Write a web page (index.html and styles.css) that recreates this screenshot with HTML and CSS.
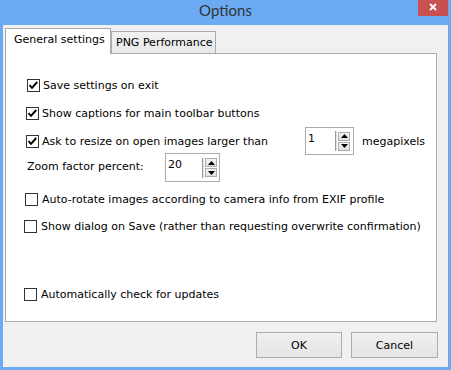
FILE: index.html
```html
<!DOCTYPE html>
<html>
<head>
<meta charset="utf-8">
<link rel="stylesheet" href="styles.css">
</head>
<body>
<div class="window">
  <div class="titlebar">
    <div class="title">Options</div>
    <div class="close"><svg width="8" height="8" viewBox="0 0 8 8"><path d="M1 1 L7 7 M7 1 L1 7" stroke="#fff" stroke-width="1.8" fill="none"/></svg></div>
  </div>
  <div class="client">
    <div class="tabs">
      <div class="tab active">General settings</div>
      <div class="tab">PNG Performance</div>
    </div>
    <div class="panel">
      <div class="row r1"><span class="box"><svg width="11" height="11" viewBox="0 0 11 11"><path d="M1.5 5.2 L4 7.8 L9.2 2" stroke="#000" stroke-width="1.9" fill="none"/></svg></span><span class="lbl">Save settings on exit</span></div>
      <div class="row r2"><span class="box"><svg width="11" height="11" viewBox="0 0 11 11"><path d="M1.5 5.2 L4 7.8 L9.2 2" stroke="#000" stroke-width="1.9" fill="none"/></svg></span><span class="lbl">Show captions for main toolbar buttons</span></div>
      <div class="row r3">
        <div class="cell w3"><span class="box"><svg width="11" height="11" viewBox="0 0 11 11"><path d="M1.5 5.2 L4 7.8 L9.2 2" stroke="#000" stroke-width="1.9" fill="none"/></svg></span><span class="lbl">Ask to resize on open images larger than</span></div>
        <div class="spin s1">
          <span class="val">1</span>
          <span class="sep"></span>
          <span class="arrows">
            <span class="arr"><svg width="7" height="4" viewBox="0 0 7 4"><path d="M0 4 L3.5 0 L7 4 Z" fill="#000"/></svg></span>
            <span class="arr"><svg width="7" height="4" viewBox="0 0 7 4"><path d="M0 0 L3.5 4 L7 0 Z" fill="#000"/></svg></span>
          </span>
        </div>
        <span class="lbl unit">megapixels</span>
      </div>
      <div class="row r4">
        <div class="cell w4"><span class="lbl zl">Zoom factor percent:</span></div>
        <div class="spin s2">
          <span class="val">20</span>
          <span class="sep"></span>
          <span class="arrows">
            <span class="arr"><svg width="7" height="4" viewBox="0 0 7 4"><path d="M0 4 L3.5 0 L7 4 Z" fill="#000"/></svg></span>
            <span class="arr"><svg width="7" height="4" viewBox="0 0 7 4"><path d="M0 0 L3.5 4 L7 0 Z" fill="#000"/></svg></span>
          </span>
        </div>
      </div>
      <div class="row r5 wide"><span class="box"></span><span class="lbl">Auto-rotate images according to camera info from EXIF profile</span></div>
      <div class="row r6 wide"><span class="box"></span><span class="lbl">Show dialog on Save (rather than requesting overwrite confirmation)</span></div>
      <div class="row r7 wide"><span class="box"></span><span class="lbl">Automatically check for updates</span></div>
    </div>
    <div class="buttons">
      <button class="btn ok">OK</button>
      <button class="btn cancel">Cancel</button>
    </div>
  </div>
</div>
</body>
</html>
```
FILE: styles.css
```css
* { box-sizing: border-box; }
html, body { margin: 0; padding: 0; }
body {
  width: 451px; height: 370px; overflow: hidden;
  font-family: "DejaVu Sans", Verdana, sans-serif;
  font-size: 11px; color: #000;
}
.window {
  width: 451px; height: 370px;
  background: #6aabf3;
  display: flex; flex-direction: column;
}
.titlebar {
  height: 25px; flex: none;
  display: grid; grid-template-columns: 1fr auto 1fr;
}
.title {
  grid-column: 2;
  font-family: Lato, "Open Sans", sans-serif;
  font-size: 15px; line-height: 21px; color: #333;
}
.close {
  grid-column: 3; justify-self: end; align-self: start;
  width: 30px; height: 16px; margin-right: 3px;
  background: #c75050;
  display: flex; justify-content: center; align-items: flex-start;
  padding-top: 3px;
}
.close svg { display: block; }
.client {
  flex: 1;
  margin: 0 3px 3px;
  background: #f0f0f0;
  padding: 3px 11px 0 2px;
  display: flex; flex-direction: column;
}
.tabs { display: flex; align-items: flex-end; height: 25px; flex: none; }
.tab {
  border: 1px solid #acacac; border-bottom: none;
  background: linear-gradient(#f2f2f2, #e8e8e8);
  height: 22px; width: 105px;
  padding: 4px 0 0 4px;
  line-height: 13px; white-space: nowrap;
}
.tab.active {
  background: #fff;
  width: 106px; height: 26px;
  margin-bottom: -1px;
  position: relative; z-index: 1;
  padding: 4px 0 0 8px;
}
.panel {
  height: 269px; flex: none;
  background: #fff;
  border: 1px solid #acacac;
}
.row { display: flex; align-items: center; gap: 3px; }
.row.wide { gap: 4px; }
.box {
  width: 13px; height: 13px; flex: none;
  border: 1px solid #333; background: #fff;
}
.box svg { display: block; }
.lbl { line-height: 13px; white-space: nowrap; }
.cell { display: flex; align-items: center; gap: 3px; flex: none; }
.r1 { margin: 25px 0 0 21px; }
.r2 { margin: 15px 0 0 20px; }
.r3 { margin: 7px 0 0 20px; height: 28px; gap: 0; }
.w3 { width: 279px; }
.unit { margin-left: 8px; }
.r4 { margin: -2px 0 0 21px; height: 29px; gap: 0; }
.w4 { width: 138px; }
.zl { padding-bottom: 2px; }
.r5 { margin: 11px 0 0 19px; }
.r6 { margin: 14px 0 0 18px; }
.r7 { margin: 55px 0 0 18px; }
.spin {
  display: flex; align-items: center;
  border: 1px solid #ababab; background: #fff;
  flex: none;
}
.s1 { width: 49px; height: 28px; padding-right: 3px; }
.s2 { width: 55px; height: 29px; padding-right: 2px; }
.val {
  flex: 1; align-self: stretch;
  padding: 4px 0 0 2px; line-height: 13px;
}
.sep {
  width: 2px; height: 20px; margin-right: 1px;
  border-left: 1px solid #9a9a9a; border-right: 1px solid #e0e0e0;
}
.arrows { display: flex; flex-direction: column; gap: 1px; }
.arr {
  width: 12px; height: 9px;
  border: 1px solid #acacac;
  background: linear-gradient(#f4f4f4, #e0e0e0);
  display: flex; align-items: center; justify-content: center;
}
.arr svg { display: block; }
.buttons {
  display: flex; justify-content: flex-end; gap: 9px;
  margin: 10px -1px 0 0;
}
.btn {
  height: 26px;
  border: 1px solid #acacac;
  background: linear-gradient(#f0f0f0, #e5e5e5);
  font: inherit; color: #000; padding: 0;
}
.ok { width: 86px; }
.cancel { width: 87px; }
```
